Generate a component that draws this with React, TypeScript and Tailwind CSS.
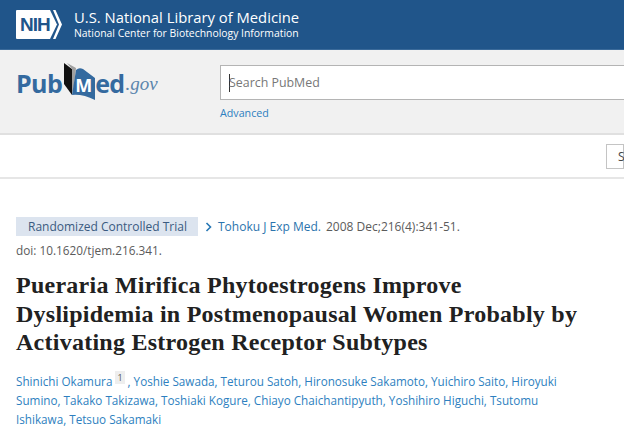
import React from 'react';

const sans = "font-['Open_Sans','Noto_Sans',sans-serif]";

const authorLinks = [
  'Yoshie Sawada',
  'Teturou Satoh',
  'Hironosuke Sakamoto',
  'Yuichiro Saito',
  'Hiroyuki Sumino',
  'Takako Takizawa',
  'Toshiaki Kogure',
  'Chiayo Chaichantipyuth',
  'Yoshihiro Higuchi',
  'Tsutomu Ishikawa',
  'Tetsuo Sakamaki',
];

const NihLogo = () => (
  <div className="relative h-[29px] w-[46px] shrink-0">
    <svg width="46" height="29" viewBox="0 0 46 29" className="absolute left-0 top-0">
      <path d="M1 0H34L41 14.5L34 29H1Q0 29 0 28V1Q0 0 1 0Z" fill="#fff" />
      <path d="M37 0H39.5L46 14.5L39.5 29H37L43 14.5Z" fill="#fff" />
    </svg>
    <span className="absolute left-[4px] top-[4px] font-['Liberation_Sans',sans-serif] text-[19px] font-bold leading-[21px] tracking-[-1px] text-[#20558a]">
      NIH
    </span>
  </div>
);

const BookMark = () => (
  <svg width="32" height="40" viewBox="0 0 32 40" className="absolute left-0 top-0">
    <path d="M1 1L9 7V33L1 22Z" fill="#111" />
    <path d="M4 1L13 6L11 24L9 33V7Z" fill="#a0a0a0" />
    <path d="M9 33L13 8Q16 5 20 7L32 16V38Q20 32 9 33Z" fill="#346a9f" />
  </svg>
);

export default function App() {
  return (
    <div className={`h-[428px] w-[624px] overflow-hidden bg-white ${sans}`}>
      <header className="flex h-[50px] items-center gap-[12px] border-b border-[#3a6a9a] bg-[#20558a] pl-[16px] text-white">
        <NihLogo />
        <div className="mt-[-1px]">
          <div className="text-[14.8px] leading-[18px]">U.S. National Library of Medicine</div>
          <div className="text-[10.4px] leading-[14px]">National Center for Biotechnology Information</div>
        </div>
      </header>

      <section className="flex h-[85px] border-b-2 border-[#e0e0e0] bg-[#f1f1f1]">
        <div className="flex w-[220px] shrink-0 items-start pl-[16px] pt-[12px] text-[#346a9f]">
          <span className="mt-[8px] text-[25px] font-bold leading-[26px] tracking-[-0.6px]">Pub</span>
          <div className="relative ml-[1px] h-[40px] w-[32px] shrink-0">
            <BookMark />
            <span className="absolute left-[12px] top-[13px] text-[18px] font-bold leading-[20px] text-white">M</span>
          </div>
          <span className="mt-[8px] text-[25px] font-bold leading-[26px] tracking-[-0.6px]">ed</span>
          <span className="ml-[1px] mt-[11px] font-['Liberation_Serif',serif] text-[19px] italic leading-[22px] text-[#5b86ad]">
            .gov
          </span>
        </div>
        <div className="pt-[15px]">
          <div className="flex h-[35px] w-[420px] items-center border border-[#b4b4b4] bg-white pl-[8px] pt-[1px] text-[12.4px] text-[#777]">
            <span className="mr-[-1px] h-[18px] w-[1px] bg-[#333]" />
            Search PubMed
          </div>
          <a className="mt-[5px] block text-[10.7px] leading-[16px] text-[#2e7fc0]">Advanced</a>
        </div>
      </section>

      <nav className="flex h-[44px] justify-end border-b-2 border-[#e6e6e6] pt-[9px]">
        <div className="h-[25px] w-[18px] border border-[#c4c4c4] pl-[11px] text-[12px] leading-[23px] text-[#444]">
          <span className="block w-[6px] overflow-hidden">S</span>
        </div>
      </nav>

      <main className="px-[16px] pt-[38px]">
        <div className="flex items-center text-[12px] leading-[19px] text-[#5b5b5b]">
          <span className="h-[19px] w-[182px] bg-[#dce4ef] pl-[12px] text-[#3a5a80]">Randomized Controlled Trial</span>
          <svg width="8" height="10" viewBox="0 0 8 10" className="ml-[7px] mr-[5px]">
            <path d="M1.5 1L5.5 5L1.5 9" fill="none" stroke="#2677b5" strokeWidth="1.6" />
          </svg>
          <a className="text-[#2b74ad]">Tohoku J Exp Med.</a>
          <span className="ml-[5px]">2008 Dec;216(4):341-51.</span>
        </div>
        <div className="mt-[5px] text-[11.8px] leading-[18px] text-[#5b5b5b]">doi: 10.1620/tjem.216.341.</div>

        <h1 className="mt-[12px] w-[600px] font-['Liberation_Serif',serif] text-[24px] font-bold leading-[28.5px] tracking-[0.25px] text-[#212121]">
          Pueraria Mirifica Phytoestrogens Improve
          <br />
          Dyslipidemia in Postmenopausal Women Probably by
          <br />
          Activating Estrogen Receptor Subtypes
        </h1>

        <p className="mt-[15px] w-[560px] text-[11.7px] leading-[19px] text-[#2e7fc0]">
          Shinichi Okamura
          <sup className="mx-[3px] bg-[#eee] px-[2px] text-[9px] leading-none text-[#555]">1</sup>
          {authorLinks.map((name) => `, ${name}`).join('')}
        </p>
      </main>
    </div>
  );
}
